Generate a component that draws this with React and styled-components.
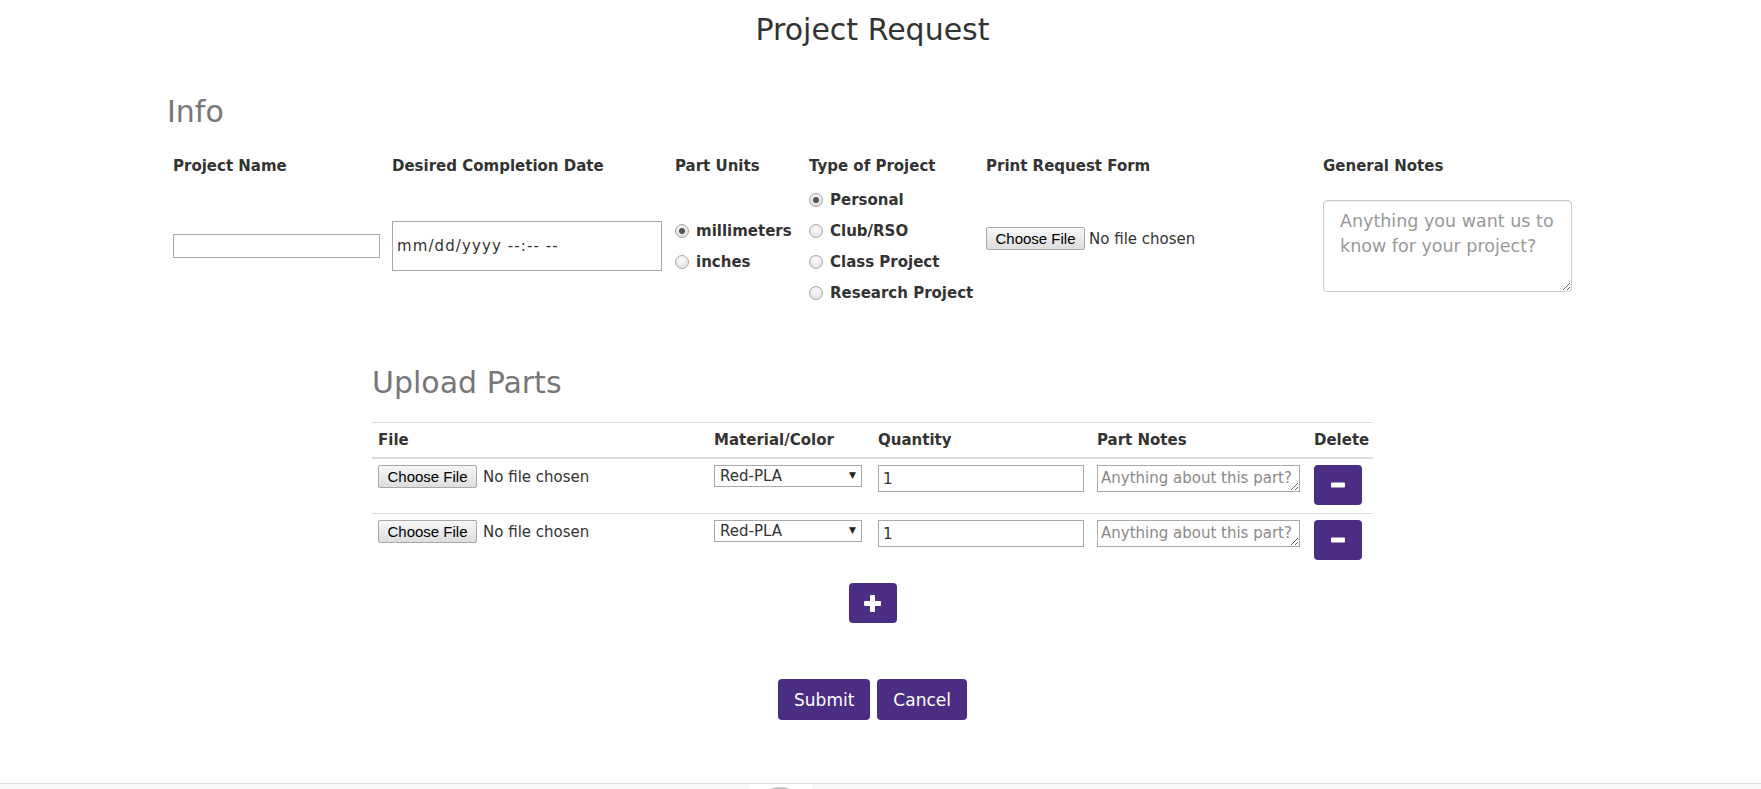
import React from 'react'
import styled, { createGlobalStyle } from 'styled-components'

const PURPLE = '#4b2e83'

const GlobalStyle = createGlobalStyle`
  html, body {
    margin: 0;
    padding: 0;
    background: #fff;
  }
  body {
    font-family: "DejaVu Sans", Verdana, sans-serif;
    color: #333;
  }
  *, *::before, *::after {
    box-sizing: border-box;
  }
`

const Shell = styled.div`
  min-height: 100vh;
  display: flex;
  flex-direction: column;
`
const Main = styled.main`
  flex: 1;
  display: flex;
  flex-direction: column;
  align-items: center;
  padding-right: 16px;
`
const Title = styled.h1`
  margin: 12px 0 0;
  font-size: 30px;
  line-height: 36px;
  font-weight: normal;
  color: #333;
`
const Section = styled.section`
  width: ${p => p.$width}px;
  margin-top: ${p => p.$top}px;
`
const SectionTitle = styled.h2`
  margin: 0;
  font-size: 30px;
  line-height: 36px;
  font-weight: normal;
  color: #777;
`
const InfoGrid = styled.div`
  display: grid;
  grid-template-columns: 207px 271px 122px 165px 325px 249px;
  column-gap: 12px;
  row-gap: 8px;
  align-items: center;
  padding: 0 6px;
  margin-top: 26px;
`
const FieldLabel = styled.div`
  font-size: 15px;
  line-height: 20px;
  font-weight: bold;
`
const TextInput = styled.input`
  display: block;
  width: ${p => p.$width}px;
  height: ${p => p.$height}px;
  margin: 0;
  padding: 1px 4px;
  border: 1px solid #a9a9a9;
  border-radius: 0;
  font-family: "DejaVu Sans", Verdana, sans-serif;
  font-size: 15px;
  letter-spacing: ${p => p.$spread || 0}px;
  color: #333;
  background: #fff;
  &::placeholder {
    color: ${p => (p.$darkHint ? '#333' : '#999')};
  }
`
const RadioGroup = styled.div`
  display: flex;
  flex-direction: column;
`
const RadioRow = styled.label`
  display: flex;
  align-items: center;
  gap: 7px;
  height: 31px;
  font-size: 15px;
  font-weight: bold;
  white-space: nowrap;
`
const Radio = styled.input.attrs({ type: 'radio' })`
  appearance: none;
  width: 14px;
  height: 14px;
  margin: 0;
  flex: none;
  border-radius: 50%;
  border: 1px solid #a8a8a8;
  background: radial-gradient(circle at 50% 35%, #fbfbfb, #dcdcdc);
  &:checked {
    background: radial-gradient(circle, #555 0 2.6px, transparent 3.4px),
      radial-gradient(circle at 50% 35%, #fbfbfb, #d4d4d4);
  }
`
const FileControl = styled.div`
  display: flex;
  align-items: center;
  gap: ${p => p.$gap}px;
  margin-bottom: ${p => p.$lift || 0}px;
`
const ChooseButton = styled.button`
  height: 23px;
  padding: 0 8.5px;
  border: 1px solid #a9a9a9;
  border-radius: 2px;
  background: linear-gradient(#f7f7f7, #dddddd);
  font-family: "Liberation Sans", Arial, sans-serif;
  font-size: 15px;
  color: #000;
`
const FileStatus = styled.span`
  font-size: 15px;
  color: #333;
  white-space: nowrap;
`
const NotesArea = styled.textarea`
  display: block;
  width: 249px;
  height: 92px;
  margin: 0;
  padding: 8px 16px;
  border: 1px solid #ccc;
  border-radius: 4px;
  box-shadow: inset 0 1px 1px rgba(0, 0, 0, 0.075);
  font-family: "DejaVu Sans", Verdana, sans-serif;
  font-size: 17.5px;
  line-height: 25px;
  color: #333;
  resize: vertical;
  &::placeholder {
    color: #999;
  }
`
const PartsTable = styled.table`
  width: 100%;
  margin-top: 21px;
  border-collapse: collapse;
  table-layout: fixed;
`
const HeadCell = styled.th`
  width: ${p => p.$w}px;
  padding: 7px 6px;
  text-align: left;
  font-size: 15px;
  line-height: 20px;
  font-weight: bold;
  border-top: 1px solid #ddd;
  border-bottom: 2px solid #ddd;
`
const BodyRow = styled.tr`
  & + & > td {
    border-top: 1px solid #ddd;
  }
`
const Cell = styled.td`
  padding: 6px 6px 8px;
  vertical-align: top;
`
const SelectWrap = styled.div`
  position: relative;
  width: 148px;
`
const Select = styled.select`
  display: block;
  width: 100%;
  height: 22px;
  margin: 0;
  padding: 0 20px 0 5px;
  appearance: none;
  border: 1px solid #a9a9a9;
  border-radius: 0;
  background: #fff;
  font-family: "DejaVu Sans", Verdana, sans-serif;
  font-size: 15px;
  color: #333;
`
const SelectArrow = styled.span`
  position: absolute;
  right: 6px;
  top: 5px;
  font-size: 9px;
  line-height: 10px;
  color: #222;
  pointer-events: none;
`
const PartNote = styled.textarea`
  display: block;
  width: 203px;
  height: 27px;
  margin: 0;
  padding: 2px 3px;
  border: 1px solid #a9a9a9;
  border-radius: 0;
  font-family: "DejaVu Sans", Verdana, sans-serif;
  font-size: 15px;
  line-height: 20px;
  overflow: hidden;
  resize: both;
  &::placeholder {
    color: #8a8a8a;
  }
`
const IconButton = styled.button`
  display: flex;
  align-items: center;
  justify-content: center;
  width: 48px;
  height: 40px;
  padding: 0;
  border: none;
  border-radius: 4px;
  background: ${PURPLE};
  cursor: pointer;
`
const AddRow = styled.div`
  display: flex;
  justify-content: center;
  margin-top: 15px;
`
const Actions = styled.div`
  display: flex;
  gap: 7px;
  margin-top: 56px;
`
const ActionButton = styled.button`
  height: 41px;
  padding: 0 16px;
  border: none;
  border-radius: 4px;
  background: ${PURPLE};
  color: #fff;
  font-family: "DejaVu Sans", Verdana, sans-serif;
  font-size: 17px;
  cursor: pointer;
`
const Footer = styled.footer`
  height: 6px;
  display: flex;
  justify-content: center;
  padding-right: 201px;
  border-top: 1px solid #dcdcdc;
  background: #f7f7f7;
  overflow: hidden;
`
const FooterTab = styled.div`
  width: 63px;
  height: 5px;
  display: flex;
  justify-content: center;
  background: #fff;
`
const FooterKnob = styled.div`
  width: 24px;
  height: 8px;
  margin-top: 3px;
  border-radius: 50%;
  background: #c9c9c9;
`

const MinusIcon = () => (
  <svg width="14" height="6" viewBox="0 0 14 6">
    <rect x="0" y="0.5" width="14" height="5" rx="1" fill="#fff" />
  </svg>
)

const PlusIcon = () => (
  <svg width="17" height="17" viewBox="0 0 17 17">
    <rect x="6" y="0" width="5" height="17" rx="1" fill="#fff" />
    <rect x="0" y="6" width="17" height="5" rx="1" fill="#fff" />
  </svg>
)

const units = ['millimeters', 'inches']
const projectTypes = ['Personal', 'Club/RSO', 'Class Project', 'Research Project']
const columns = [
  ['File', 336],
  ['Material/Color', 164],
  ['Quantity', 219],
  ['Part Notes', 217],
  ['Delete', 65]
]

function PartRow() {
  return (
    <BodyRow>
      <Cell>
        <FileControl $gap={6}>
          <ChooseButton type="button">Choose File</ChooseButton>
          <FileStatus>No file chosen</FileStatus>
        </FileControl>
      </Cell>
      <Cell>
        <SelectWrap>
          <Select defaultValue="Red-PLA">
            <option>Red-PLA</option>
            <option>Blue-PLA</option>
            <option>Black-PLA</option>
          </Select>
          <SelectArrow>▼</SelectArrow>
        </SelectWrap>
      </Cell>
      <Cell>
        <TextInput $width={206} $height={27} defaultValue="1" />
      </Cell>
      <Cell>
        <PartNote placeholder="Anything about this part?" />
      </Cell>
      <Cell>
        <IconButton type="button" aria-label="Delete part">
          <MinusIcon />
        </IconButton>
      </Cell>
    </BodyRow>
  )
}

export default function App() {
  return (
    <Shell>
      <GlobalStyle />
      <Main>
        <Title>Project Request</Title>

        <Section $width={1411} $top={46}>
          <SectionTitle>Info</SectionTitle>
          <InfoGrid>
            <FieldLabel>Project Name</FieldLabel>
            <FieldLabel>Desired Completion Date</FieldLabel>
            <FieldLabel>Part Units</FieldLabel>
            <FieldLabel>Type of Project</FieldLabel>
            <FieldLabel>Print Request Form</FieldLabel>
            <FieldLabel>General Notes</FieldLabel>

            <TextInput $width={207} $height={24} />
            <TextInput $width={270} $height={50} $spread={1.1} $darkHint placeholder="mm/dd/yyyy --:-- --" />
            <RadioGroup>
              {units.map((u, i) => (
                <RadioRow key={u}>
                  <Radio name="units" defaultChecked={i === 0} />
                  {u}
                </RadioRow>
              ))}
            </RadioGroup>
            <RadioGroup>
              {projectTypes.map((t, i) => (
                <RadioRow key={t}>
                  <Radio name="type" defaultChecked={i === 0} />
                  {t}
                </RadioRow>
              ))}
            </RadioGroup>
            <FileControl $gap={4} $lift={15}>
              <ChooseButton type="button">Choose File</ChooseButton>
              <FileStatus>No file chosen</FileStatus>
            </FileControl>
            <NotesArea placeholder="Anything you want us to know for your project?" />
          </InfoGrid>
        </Section>

        <Section $width={1001} $top={57}>
          <SectionTitle>Upload Parts</SectionTitle>
          <PartsTable>
            <thead>
              <tr>
                {columns.map(([name, w]) => (
                  <HeadCell key={name} $w={w}>{name}</HeadCell>
                ))}
              </tr>
            </thead>
            <tbody>
              <PartRow />
              <PartRow />
            </tbody>
          </PartsTable>
        </Section>

        <AddRow>
          <IconButton type="button" aria-label="Add part">
            <PlusIcon />
          </IconButton>
        </AddRow>

        <Actions>
          <ActionButton type="button">Submit</ActionButton>
          <ActionButton type="button">Cancel</ActionButton>
        </Actions>
      </Main>
      <Footer>
        <FooterTab>
          <FooterKnob />
        </FooterTab>
      </Footer>
    </Shell>
  )
}
